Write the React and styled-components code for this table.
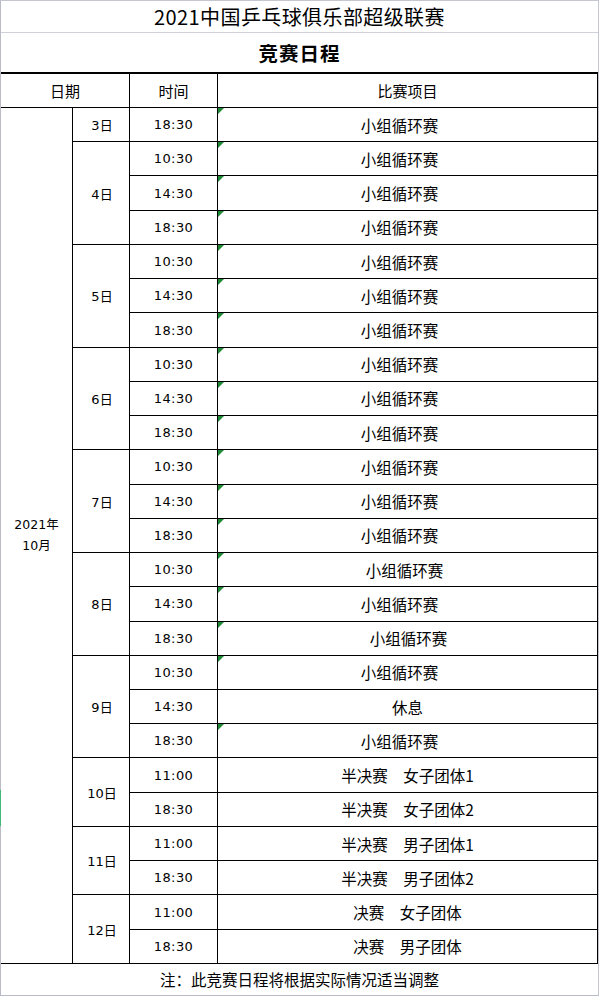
import React from "react";
import styled, { createGlobalStyle } from "styled-components";

const GlobalStyle = createGlobalStyle`
  html, body {
    margin: 0;
    padding: 0;
    background: #fff;
  }
  body {
    font-family: "Noto Sans CJK SC", "DejaVu Sans", sans-serif;
    color: #000;
  }
`;

const Sheet = styled.div`
  position: relative;
  width: 597px;
  border-left: 1px solid #b9bcc6;
  border-top: 1px solid #c4c7d0;
  border-right: 1px solid #c4c7d0;
  border-bottom: 1px solid #b9bcc6;
  background: #fff;
`;

const SelectMark = styled.div`
  position: absolute;
  left: -1px;
  top: 789px;
  width: 2px;
  height: 36px;
  background: #3fba78;
`;

const TitleRow = styled.div`
  height: 31px;
  border-bottom: 1px solid #cfd2da;
  display: flex;
  align-items: center;
  justify-content: center;
  font-size: 20px;
  letter-spacing: 0.4px;
`;

const SubtitleRow = styled.div`
  height: 39px;
  display: flex;
  align-items: center;
  justify-content: center;
  font-size: 19.5px;
  font-weight: 700;
  letter-spacing: 1px;
`;

const Grid = styled.div`
  display: grid;
  grid-template-columns: 71px 56px 87px 1fr;
  grid-template-rows: 33px repeat(25, 33.24px);
  gap: 1px;
  background: #000;
  border-top: 2px solid #000;
  border-right: 1px solid #000;
  border-bottom: 1px solid #000;
`;

const Cell = styled.div`
  position: relative;
  background: #fff;
  display: flex;
  align-items: center;
  justify-content: center;
  grid-column: ${({ $col }) => $col};
  grid-row: ${({ $row, $span = 1 }) => `${$row} / span ${$span}`};
  font-size: 15px;
  white-space: pre;
`;

const HeadCell = styled(Cell)`
  font-size: 15px;
`;

const MonthCell = styled(Cell)`
  flex-direction: column;
  font-size: 12.5px;
  line-height: 21px;
  font-family: "DejaVu Sans", "Noto Sans CJK SC", sans-serif;
`;

const DayCell = styled(Cell)`
  font-family: "DejaVu Sans", "Noto Sans CJK SC", sans-serif;
  font-size: 13px;
  padding-left: 2px;
`;

const TimeCell = styled(Cell)`
  font-family: "DejaVu Sans", sans-serif;
  font-size: 13px;
  letter-spacing: 0.4px;
`;

// $offset nudges centred text left (negative) or right (positive), like the
// stray spaces in the original sheet cells
const ItemCell = styled(Cell)`
  padding-left: ${({ $offset = 0 }) => Math.max(0, $offset * 2)}px;
  padding-right: ${({ $offset = 0 }) => Math.max(0, -$offset * 2)}px;
  font-size: 15.5px;

  &::before {
    content: "";
    display: ${({ $flag }) => ($flag ? "block" : "none")};
    position: absolute;
    top: 0;
    left: 0;
    border-top: 6px solid #1e8a34;
    border-right: 6px solid transparent;
  }
`;

const Footer = styled.div`
  height: 31px;
  display: flex;
  align-items: center;
  justify-content: center;
  font-size: 15.5px;
`;

const RR = "小组循环赛";

const schedule = [
  { day: "3日", rows: [["18:30", RR, true, -8]] },
  ...["4日", "5日", "6日", "7日"].map((day) => ({
    day,
    rows: [
      ["10:30", RR, true, -8],
      ["14:30", RR, true, -8],
      ["18:30", RR, true, -8],
    ],
  })),
  {
    day: "8日",
    rows: [
      ["10:30", RR, true, -3],
      ["14:30", RR, true, -8],
      ["18:30", RR, true, 1],
    ],
  },
  {
    day: "9日",
    rows: [
      ["10:30", RR, true, -8],
      ["14:30", "休息", false],
      ["18:30", RR, true, -8],
    ],
  },
  {
    day: "10日",
    rows: [
      ["11:00", "半决赛　女子团体1"],
      ["18:30", "半决赛　女子团体2"],
    ],
  },
  {
    day: "11日",
    rows: [
      ["11:00", "半决赛　男子团体1"],
      ["18:30", "半决赛　男子团体2"],
    ],
  },
  {
    day: "12日",
    rows: [
      ["11:00", "决赛　女子团体"],
      ["18:30", "决赛　男子团体"],
    ],
  },
];

function ScheduleBody() {
  const cells = [];
  let row = 2;
  schedule.forEach((group) => {
    cells.push(
      <DayCell key={group.day} $col={2} $row={row} $span={group.rows.length}>
        {group.day}
      </DayCell>
    );
    group.rows.forEach(([time, item, flag, offset], i) => {
      cells.push(
        <TimeCell key={`${group.day}-t${i}`} $col={3} $row={row}>
          {time}
        </TimeCell>,
        <ItemCell
          key={`${group.day}-i${i}`}
          $col={4}
          $row={row}
          $flag={flag}
          $offset={offset}
        >
          {item}
        </ItemCell>
      );
      row += 1;
    });
  });
  return cells;
}

export default function App() {
  return (
    <>
      <GlobalStyle />
      <Sheet>
        <SelectMark />
        <TitleRow>2021中国乒乓球俱乐部超级联赛</TitleRow>
        <SubtitleRow>竞赛日程</SubtitleRow>
        <Grid>
          <HeadCell $col="1 / span 2" $row={1}>
            日期
          </HeadCell>
          <HeadCell $col={3} $row={1}>
            时间
          </HeadCell>
          <HeadCell $col={4} $row={1}>
            比赛项目
          </HeadCell>
          <MonthCell $col={1} $row={2} $span={25}>
            <span>2021年</span>
            <span>10月</span>
          </MonthCell>
          <ScheduleBody />
        </Grid>
        <Footer>注：此竞赛日程将根据实际情况适当调整</Footer>
      </Sheet>
    </>
  );
}
